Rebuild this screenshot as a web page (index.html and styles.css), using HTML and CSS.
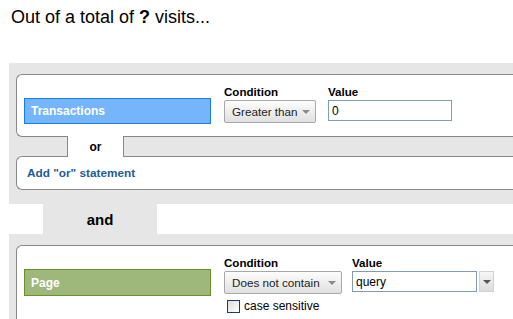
FILE: index.html
```html
<!DOCTYPE html>
<html lang="en">
<head>
  <meta charset="UTF-8" />
  <title>Segment conditions</title>
  <link rel="stylesheet" href="styles.css">
</head>
<body>
  <h1 class="title">Out of a total of <b>?</b> visits...</h1>

  <div class="group">
    <div class="card">
      <div class="row">
        <div class="pill pill-blue">Transactions</div>
        <div class="field">
          <label>Condition</label>
          <div class="select select-gt"><span>Greater than</span><span class="caret"></span></div>
        </div>
        <div class="field">
          <label>Value</label>
          <div class="input input-short">0</div>
        </div>
      </div>
    </div>
    <div class="or"><span class="or-tab">or</span></div>
    <div class="card card-add">
      <a class="add-or" href="#">Add "or" statement</a>
    </div>
  </div>

  <div class="and"><span class="and-tab">and</span></div>

  <div class="group">
    <div class="card">
      <div class="row">
        <div class="pill pill-green">Page</div>
        <div class="field">
          <label>Condition</label>
          <div class="select select-dnc"><span>Does not contain</span><span class="caret"></span></div>
          <div class="check">
            <span class="checkbox"></span>
            <span>case sensitive</span>
          </div>
        </div>
        <div class="field">
          <label>Value</label>
          <div class="combo">
            <div class="input input-long">query</div>
            <span class="drop"><span class="caret caret-dark"></span></span>
          </div>
        </div>
      </div>
    </div>
  </div>
</body>
</html>
```

FILE: styles.css
```css
body {
  margin: 0;
  background: #ffffff;
  font-family: "Liberation Sans", Arial, sans-serif;
  color: #000000;
  overflow: hidden;
}
.title {
  margin: 6px 0 0 11px;
  font-size: 18px;
  font-weight: normal;
  line-height: 22px;
}
.group {
  margin: 35px 0 0 9px;
  background: #e6e6e6;
  padding: 11px 0 14px 7px;
}
.and + .group {
  margin-top: 0;
}
.card {
  background: #ffffff;
  border: 1px solid #888888;
  border-right: none;
  border-radius: 6px 0 0 6px;
  padding: 10px 0 12px 7px;
}
.row {
  display: flex;
  align-items: flex-start;
}
.pill {
  box-sizing: border-box;
  width: 187px;
  height: 26px;
  margin: 13px 13px 0 0;
  padding-left: 6px;
  display: flex;
  align-items: center;
  color: #ffffff;
  font-size: 12px;
  font-weight: bold;
}
.pill-blue {
  background: #74b5fc;
  border: 1px solid #1a7cf4;
}
.pill-green {
  height: 27px;
  background: #9eb77b;
  border: 1px solid #6b8f2a;
}
.field {
  display: flex;
  flex-direction: column;
  margin-right: 12px;
}
.field label {
  font-size: 11.6px;
  font-weight: bold;
  line-height: 14px;
}
.select {
  box-sizing: border-box;
  height: 23px;
  margin-top: 1px;
  padding: 0 5px 0 7px;
  display: flex;
  align-items: center;
  justify-content: space-between;
  background: linear-gradient(#fdfdfd, #e0e0e0);
  border: 1px solid #a8a8a8;
  border-radius: 2px;
  font-size: 11.7px;
  color: #222222;
  white-space: nowrap;
}
.select-gt {
  width: 92px;
}
.select-dnc {
  width: 118px;
  margin-right: -2px;
}
.caret {
  flex: none;
  width: 0;
  height: 0;
  border-left: 4px solid transparent;
  border-right: 4px solid transparent;
  border-top: 4px solid #8a8a8a;
}
.caret-dark {
  border-top-color: #555555;
}
.input {
  box-sizing: border-box;
  height: 21px;
  margin-top: 1px;
  padding-left: 3px;
  display: flex;
  align-items: center;
  background: #ffffff;
  border: 1px solid #7f9db9;
  font-size: 12px;
}
.input-short {
  width: 124px;
}
.input-long {
  width: 125px;
}
.combo {
  display: flex;
  align-items: flex-start;
}
.drop {
  box-sizing: border-box;
  width: 15px;
  height: 21px;
  margin: 1px 0 0 2px;
  display: flex;
  align-items: center;
  justify-content: center;
  background: linear-gradient(#f6f6f6, #dcdcdc);
  border: 1px solid #d2d2d2;
}
.check {
  display: flex;
  align-items: center;
  gap: 4px;
  margin: 6px 0 0 3px;
  font-size: 12px;
  line-height: 13px;
}
.checkbox {
  box-sizing: border-box;
  width: 13px;
  height: 13px;
  background: linear-gradient(135deg, #dcdcd7, #ffffff);
  border: 1px solid #1c3c6a;
}
.or {
  display: flex;
  height: 19px;
}
.or-tab {
  box-sizing: border-box;
  width: 57px;
  margin: -1px 0 -1px 51px;
  position: relative;
  z-index: 1;
  display: flex;
  align-items: center;
  justify-content: center;
  background: #ffffff;
  border-left: 1px solid #888888;
  border-right: 1px solid #888888;
  font-size: 12px;
  font-weight: bold;
}
.card-add {
  height: 32px;
  padding: 0 0 0 10px;
  display: flex;
  align-items: center;
}
.add-or {
  color: #1d5c96;
  font-size: 11.8px;
  font-weight: bold;
  text-decoration: none;
}
.and {
  display: flex;
  height: 30px;
}
.and-tab {
  width: 114px;
  margin-left: 43px;
  display: flex;
  align-items: center;
  justify-content: center;
  background: #e6e6e6;
  font-size: 15px;
  font-weight: bold;
}
```
